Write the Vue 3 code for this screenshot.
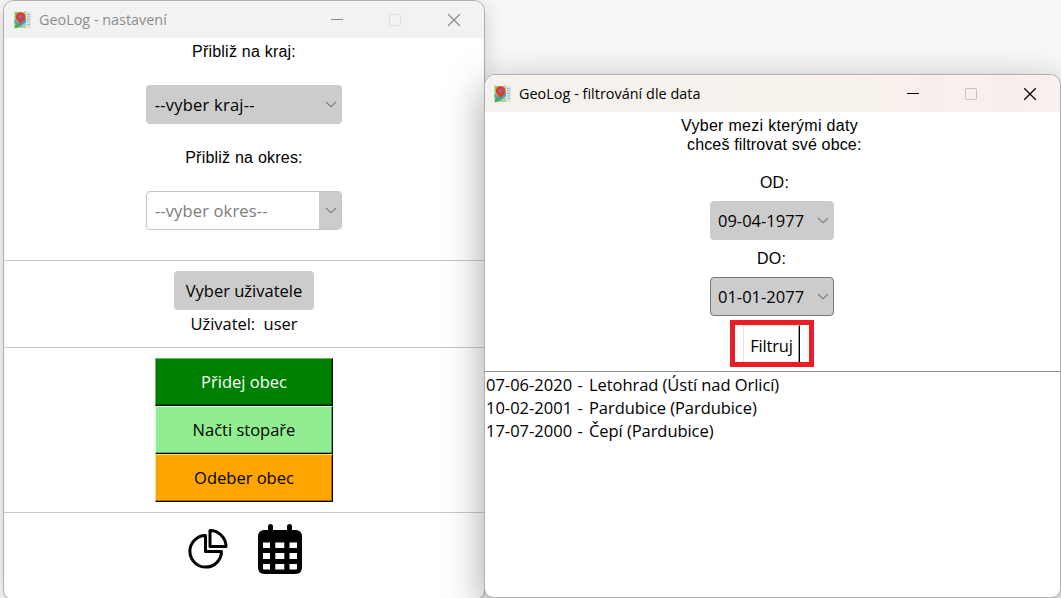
<script setup>
const rows = [
  { date: '07-06-2020', place: 'Letohrad (Ústí nad Orlicí)' },
  { date: '10-02-2001', place: 'Pardubice (Pardubice)' },
  { date: '17-07-2000', place: 'Čepí (Pardubice)' }
]
const windows = [
  { id: 'settings', title: 'GeoLog - nastavení' },
  { id: 'filter', title: 'GeoLog - filtrování dle data' }
]
</script>

<template>
  <main class="desktop">
    <section v-for="w in windows" :key="w.id" class="window" :class="w.id">
      <header class="bar">
        <svg class="logo" width="18" height="18" viewBox="0 0 18 18">
          <path d="M0.5 0.5 L6 1.5 L12 0.5 V17 L6 16.5 L0.5 17.5Z" fill="#8fc866" />
          <path d="M6 1.5 L12 0.5 V17 L6 16Z" fill="#b1d68a" />
          <path d="M0.5 9 L5 12 L12 7 V11 L6 16 L0.5 12Z" fill="#3ba3cf" />
          <path d="M1 14 L5 12 V16 L1 17Z" fill="#55a845" />
          <path d="M12 0.5 L17 1.5 V17.5 L12 16.8Z" fill="#dce4e9" />
          <path d="M13.2 3.5h2.6M13.2 6h2.6M13.2 8.5h2.6M13.2 11h2.6M13.2 13.5h2.6" stroke="#a0b0bd" stroke-width="1" />
          <path d="M6.5 13.5 C5.5 10.7 1.8 9.3 1.8 6 A4.8 4.8 0 0 1 11.4 6 C11.4 9.3 7.5 10.7 6.5 13.5Z" fill="#e8372f" />
          <circle cx="6.6" cy="5.9" r="2" fill="#707a91" />
        </svg>
        <h1>{{ w.title }}</h1>
        <div class="controls">
          <svg width="12" height="12" viewBox="0 0 12 12"><path d="M1 5.5H13" /></svg>
          <svg class="max" width="12" height="12" viewBox="0 0 12 12"><rect x=".5" y=".5" width="11" height="11" rx="1" /></svg>
          <svg width="12" height="12" viewBox="0 0 12 12"><path class="cross" d="M.2 .2 11.8 11.8M11.8 .2 .2 11.8" /></svg>
        </div>
      </header>

      <div v-if="w.id === 'settings'" class="body">
        <div class="zone zoom">
          <label class="plain">Přibliž na kraj:</label>
          <div class="select kraj"><span>--vyber kraj--</span><svg class="chev" width="12" height="7" viewBox="0 0 12 7"><path d="M1 1 6 5.7 11 1" /></svg></div>
          <label class="plain">Přibliž na okres:</label>
          <div class="select okres"><span>--vyber okres--</span><i><svg class="chev" width="12" height="7" viewBox="0 0 12 7"><path d="M1 1 6 5.7 11 1" /></svg></i></div>
        </div>
        <div class="zone user">
          <button class="pick">Vyber uživatele</button>
          <p class="who">Uživatel:&nbsp; user</p>
        </div>
        <div class="zone actions">
          <button class="act add">Přidej obec</button>
          <button class="act load">Načti stopaře</button>
          <button class="act del">Odeber obec</button>
        </div>
        <div class="tools">
          <svg width="42" height="42" viewBox="0 0 42 42" fill="none" stroke="#000" stroke-width="3">
            <path d="M18.5 7.5 A15.8 15.8 0 1 0 34.5 23.5 H18.5Z" stroke-linejoin="round" />
            <path d="M23 2.6 V18.6 H39 A16 16 0 0 0 23 2.6Z" stroke-linejoin="round" />
          </svg>
          <svg width="44" height="50" viewBox="0 0 44 50">
            <rect x="10" y="0" width="5" height="12" rx="2.5" />
            <rect x="29" y="0" width="5" height="12" rx="2.5" />
            <rect x="0" y="6" width="44" height="44" rx="6" />
            <g fill="#fff">
              <path d="M5 18.5h7v5.5h-7zM17.3 18.5h9v5.5h-9zM31.5 18.5h7.5v5.5h-7.5z" />
              <path d="M5 29h7v6h-7zM17.3 29h9v6h-9zM31.5 29h7.5v6h-7.5z" />
              <path d="M5 40h7v5.5h-6q-1 0-1-1zM17.3 40h9v5.5h-9zM31.5 40h7.5v4.5q0 1-1 1h-6.5z" />
            </g>
          </svg>
        </div>
      </div>

      <div v-else class="body">
        <div class="form">
          <p class="plain intro">Vyber mezi kterými daty<br><span>chceš filtrovat své obce:</span></p>
          <label class="plain od">OD:</label>
          <div class="select date"><span>09-04-1977</span><svg class="chev" width="12" height="7" viewBox="0 0 12 7"><path d="M1 1 6 5.7 11 1" /></svg></div>
          <label class="plain do">DO:</label>
          <div class="select date focus"><span>01-01-2077</span><svg class="chev" width="12" height="7" viewBox="0 0 12 7"><path d="M1 1 6 5.7 11 1" /></svg></div>
          <div class="mark"><button class="go">Filtruj</button></div>
        </div>
        <ul class="list">
          <li v-for="r in rows" :key="r.date"><span class="when">{{ r.date }} - </span><span class="place">{{ r.place }}</span></li>
        </ul>
      </div>
    </section>
  </main>
</template>

<style>
html, body { margin: 0; overflow: hidden; }
</style>
<style scoped>
* { box-sizing: border-box; }
.desktop { position: relative; width: 1061px; height: 598px; overflow: hidden; background: #f8f8f8; font: 16.5px "Open Sans", "Noto Sans", sans-serif; color: #000; }
.window { position: absolute; background: #fff; border: 1px solid #aeaeae; border-radius: 11px 11px 9px 9px; background-clip: padding-box; overflow: hidden; }
.settings { left: 3px; top: 0; width: 482px; height: 600px; box-shadow: 0 3px 22px rgba(0,0,0,.17); }
.filter { left: 484px; top: 74px; width: 577px; height: 524px; box-shadow: 0 12px 40px rgba(0,0,0,.36); }
.bar { height: 37px; display: flex; align-items: center; background: #f2f2f2; color: #8d8d8d; padding-left: 10px; }
.filter .bar { color: #000; background: linear-gradient(90deg, #f5f2ee 0%, #f6f1eb 62%, #f9efed 82%, #f8f0ee 100%); padding-left: 9px; }
.logo { flex: none; }
h1 { margin: 0 auto 0 7px; font-size: 14.4px; font-weight: 400; line-height: 20px; white-space: nowrap; }
.filter h1 { letter-spacing: .03px; }
.controls { display: flex; gap: 47px; margin-right: 24px; }
.controls svg { fill: none; stroke: currentColor; stroke-width: 1; overflow: visible; }
.controls .cross { stroke-width: 1.25; }
.controls .max { stroke: #dedede; }
.filter .controls .max { stroke: #c6c1be; }
.plain { font: 16px/19px "Liberation Sans", Arial, sans-serif; letter-spacing: .22px; margin: 0; white-space: nowrap; }
.zone { display: flex; flex-direction: column; align-items: center; border-bottom: 1px solid #c9c9c9; }
.zoom { height: 223px; padding-top: 4px; }
.select { height: 39px; background: #ccc; border-radius: 4px; display: flex; align-items: center; justify-content: space-between; padding: 0 5px 0 8px; line-height: 24px; white-space: nowrap; }
.chev { fill: none; stroke: #808080; stroke-width: 1.1; }
.kraj, .okres { width: 196px; letter-spacing: .22px; }
.kraj { margin: 24px 0; }
.okres { margin-top: 24px; background: #fff; border: 1px solid #c5c5c5; padding: 0 0 0 7px; color: #7c7c7c; letter-spacing: .15px; overflow: hidden; }
.kraj span, .okres span { padding-left: .8px; }
.okres i { width: 22px; height: 39px; background: #ccc; display: flex; align-items: center; justify-content: center; padding-left: 1px; }
.user { height: 87px; padding-top: 10px; }
button { font: inherit; color: inherit; padding: 0; margin: 0; border: 0; white-space: nowrap; }
.pick { width: 140px; height: 39px; border-radius: 4px; background: #ccc; }
.who { margin: 2px 0 0; line-height: 24px; letter-spacing: -.05px; }
.actions { height: 165px; padding-top: 10px; }
.act { width: 178px; height: 48px; border: 1px solid; padding-bottom: 2px; }
.add { background: green; color: #fff; border-color: #6cb36c #000 #000 #6cb36c; box-shadow: inset -1px -1px #005000; }
.load { background: #90ee90; border-color: #d5ffd5 #000 #000 #d5ffd5; box-shadow: inset -1px -1px #5ea05e; }
.del { background: orange; border-color: #ffdc80 #000 #000 #ffdc80; box-shadow: inset -1px -1px #a66b00; }
.tools { display: flex; align-items: center; gap: 29px; padding: 11px 0 0 183px; }
.form { height: 259px; display: flex; flex-direction: column; align-items: center; padding-right: 1px; }
.intro { width: 190px; padding: 4px 0 0 4px; letter-spacing: .3px; }
.intro span { padding-left: 6px; letter-spacing: .15px; }
.od { margin: 19px 0 9px 5px; }
.date { width: 124px; }
.do { margin: 9px 1px 9px 0; }
.focus { border: 1px solid #777; padding: 0 4px 0 7px; }
.mark { width: 84px; height: 47px; border: 5px solid #ed1c24; margin-top: 4px; padding-left: 8px; display: flex; }
.go { width: 57px; height: 37px; background: #fff; border-left: 1px solid #e3e3e3; border-right: 1px solid #000; border-top: 1px solid #e3e3e3; box-shadow: inset -1px 0 #a0a0a0; padding-top: 2px; letter-spacing: -.15px; }
.list { height: 227px; margin: 0; padding: 1px 0 0 1px; list-style: none; border-top: 1px solid #8c8c8c; line-height: 23px; white-space: pre; }
.when { display: inline-block; width: 103px; word-spacing: 1px; }
.place { letter-spacing: -.06px; }
</style>
